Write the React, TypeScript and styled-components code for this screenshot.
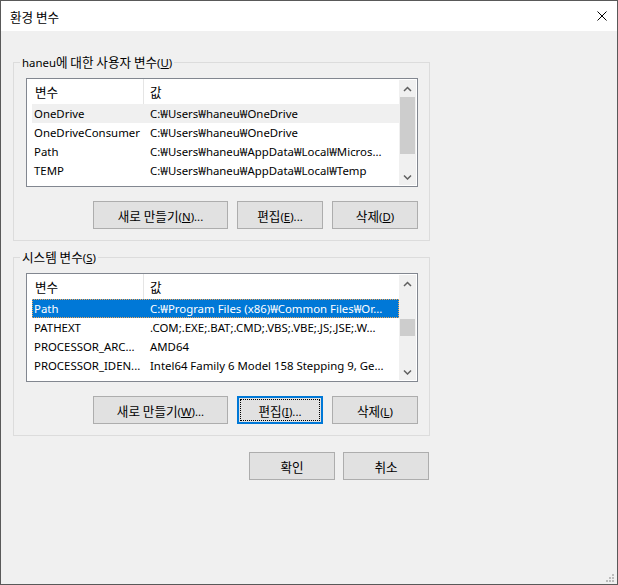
import React from "react";
import styled, { createGlobalStyle } from "styled-components";

const GlobalStyle = createGlobalStyle`
  html, body {
    margin: 0;
    padding: 0;
    background: #f0f0f0;
  }
  #root {
    width: 618px;
    height: 585px;
  }
`;

type Row = { name: string; value: string; state?: "hover" | "selected" };

const userVars: Row[] = [
  { name: "OneDrive", value: "C:₩Users₩haneu₩OneDrive", state: "hover" },
  { name: "OneDriveConsumer", value: "C:₩Users₩haneu₩OneDrive" },
  { name: "Path", value: "C:₩Users₩haneu₩AppData₩Local₩Micros..." },
  { name: "TEMP", value: "C:₩Users₩haneu₩AppData₩Local₩Temp" },
];

const systemVars: Row[] = [
  { name: "Path", value: "C:₩Program Files (x86)₩Common Files₩Or...", state: "selected" },
  { name: "PATHEXT", value: ".COM;.EXE;.BAT;.CMD;.VBS;.VBE;.JS;.JSE;.W..." },
  { name: "PROCESSOR_ARC...", value: "AMD64" },
  { name: "PROCESSOR_IDEN...", value: "Intel64 Family 6 Model 158 Stepping 9, Ge..." },
];

const Chevron = ({ down }: { down?: boolean }) => (
  <svg width="9" height="6" viewBox="0 0 9 6">
    <path
      d={down ? "M1 1.5 L4.5 5 L8 1.5" : "M1 5 L4.5 1.5 L8 5"}
      fill="none"
      stroke="#606060"
      strokeWidth="1.5"
    />
  </svg>
);

const VarList = ({ rows, thumbTop, thumbSize }: { rows: Row[]; thumbTop: number; thumbSize: number }) => (
  <ListBox>
    <ListContent>
      <HeaderRow>
        <HeadCell $first>
          <Ko>변수</Ko>
        </HeadCell>
        <HeadCell>
          <Ko>값</Ko>
        </HeadCell>
      </HeaderRow>
      {rows.map((r) => (
        <ItemRow key={r.name + r.value} $state={r.state}>
          <NameCell>{r.name}</NameCell>
          <ValueCell>{r.value}</ValueCell>
        </ItemRow>
      ))}
    </ListContent>
    <ScrollBar>
      <ArrowBox>
        <Chevron />
      </ArrowBox>
      <Track>
        <Thumb $top={thumbTop} $size={thumbSize} />
      </Track>
      <ArrowBox>
        <Chevron down />
      </ArrowBox>
    </ScrollBar>
  </ListBox>
);

const App = () => {
  return (
    <>
      <GlobalStyle />
      <Window>
        <TitleBar>
          <Ko>환경 변수</Ko>
          <svg width="10" height="10" viewBox="0 0 10 10">
            <path d="M0.5 0.5 L9.5 9.5 M9.5 0.5 L0.5 9.5" stroke="#000" strokeWidth="1" />
          </svg>
        </TitleBar>
        <Body>
          <Group $top={23}>
            <Legend>
              haneu<Ko>에 대한 사용자 변수</Ko>(<Key>U</Key>)
            </Legend>
            <VarList rows={userVars} thumbTop={0} thumbSize={57} />
            <ButtonRow>
              <Button $w={135}>
                <Ko>새로 만들기</Ko>(<Key>N</Key>)...
              </Button>
              <Button $w={86}>
                <Ko>편집</Ko>(<Key>E</Key>)...
              </Button>
              <Button $w={86}>
                <Ko>삭제</Ko>(<Key>D</Key>)
              </Button>
            </ButtonRow>
          </Group>
          <Group $top={8}>
            <Legend>
              <Ko>시스템 변수</Ko>(<Key>S</Key>)
            </Legend>
            <VarList rows={systemVars} thumbTop={27} thumbSize={17} />
            <ButtonRow>
              <Button $w={135}>
                <Ko>새로 만들기</Ko>(<Key>W</Key>)...
              </Button>
              <Button $w={86} $default>
                <Ko>편집</Ko>(<Key>I</Key>)...
              </Button>
              <Button $w={86}>
                <Ko>삭제</Ko>(<Key>L</Key>)
              </Button>
            </ButtonRow>
          </Group>
          <Footer>
            <Button $w={86}>
              <Ko>확인</Ko>
            </Button>
            <Button $w={86}>
              <Ko>취소</Ko>
            </Button>
          </Footer>
        </Body>
        <Grip width="8" height="8" viewBox="0 0 8 8">
          <rect x="6" y="0" width="2" height="2" fill="#bcbcbc" />
          <rect x="3" y="3" width="2" height="2" fill="#bcbcbc" />
          <rect x="6" y="3" width="2" height="2" fill="#bcbcbc" />
          <rect x="0" y="6" width="2" height="2" fill="#bcbcbc" />
          <rect x="3" y="6" width="2" height="2" fill="#bcbcbc" />
          <rect x="6" y="6" width="2" height="2" fill="#bcbcbc" />
        </Grip>
      </Window>
    </>
  );
};
export default App;

const Window = styled.div`
  position: relative;
  box-sizing: border-box;
  width: 618px;
  height: 585px;
  border: 1px solid #595959;
  background: #f0f0f0;
  display: flex;
  flex-direction: column;
  font-family: "Noto Sans", "Noto Sans CJK KR", sans-serif;
  font-size: 11.4px;
  color: #000;
`;
const Ko = styled.span`
  font-family: "Noto Sans CJK KR", sans-serif;
  font-size: 12.6px;
`;
const TitleBar = styled.div`
  height: 30px;
  flex: none;
  background: #fff;
  display: flex;
  align-items: center;
  justify-content: space-between;
  padding: 0 10px 0 9px;
`;
const Body = styled.div`
  display: flex;
  flex-direction: column;
  padding: 0 12px;
`;
const Group = styled.fieldset<{ $top: number }>`
  box-sizing: border-box;
  width: 417px;
  min-width: 0;
  margin: ${(p) => p.$top}px 0 0;
  padding: 8px 11px 11px 12px;
  border: 1px solid #dcdcdc;
`;
const Legend = styled.legend`
  margin-left: -6px;
  padding: 0 2px;
  line-height: 16px;
  height: 16px;
`;
const Key = styled.span`
  text-decoration: underline;
`;
const ListBox = styled.div`
  box-sizing: border-box;
  height: 109px;
  border: 1px solid #828790;
  background: #fff;
  display: flex;
  overflow: hidden;
`;
const ListContent = styled.div`
  flex: 1;
  min-width: 0;
  padding-left: 5px;
  overflow: hidden;
`;
const HeaderRow = styled.div`
  display: flex;
  height: 25px;
`;
const HeadCell = styled.div<{ $first?: boolean }>`
  box-sizing: border-box;
  display: flex;
  align-items: center;
  width: ${(p) => (p.$first ? "112px" : "auto")};
  flex: ${(p) => (p.$first ? "none" : "1")};
  padding-left: ${(p) => (p.$first ? "3px" : "6px")};
  border-right: ${(p) => (p.$first ? "1px solid #e5e5e5" : "none")};
`;
const ItemRow = styled.div<{ $state?: "hover" | "selected" }>`
  display: flex;
  height: 19px;
  line-height: 19px;
  white-space: nowrap;
  background: ${(p) =>
    p.$state === "selected" ? "#0078d7" : p.$state === "hover" ? "#f0f0f0" : "transparent"};
  color: ${(p) => (p.$state === "selected" ? "#fff" : "#000")};
  outline: ${(p) => (p.$state === "selected" ? "1px dotted #f2a85a" : "none")};
  outline-offset: -1px;
`;
const NameCell = styled.div`
  box-sizing: border-box;
  width: 112px;
  flex: none;
  padding-left: 2px;
  overflow: hidden;
  text-overflow: ellipsis;
`;
const ValueCell = styled.div`
  flex: 1;
  min-width: 0;
  padding: 0 8px 0 6px;
  overflow: hidden;
  text-overflow: ellipsis;
`;
const ScrollBar = styled.div`
  width: 17px;
  flex: none;
  margin: 1px 1px 1px 0;
  background: #f0f0f0;
  display: flex;
  flex-direction: column;
`;
const ArrowBox = styled.div`
  height: 17px;
  flex: none;
  display: flex;
  align-items: center;
  justify-content: center;
`;
const Track = styled.div`
  flex: 1;
  display: flex;
  flex-direction: column;
  align-items: center;
`;
const Thumb = styled.div<{ $top: number; $size: number }>`
  width: 15px;
  height: ${(p) => p.$size}px;
  margin-top: ${(p) => p.$top}px;
  background: #cdcdcd;
`;
const ButtonRow = styled.div`
  display: flex;
  justify-content: flex-end;
  gap: 9px;
  margin-top: 14px;
`;
const Footer = styled.div`
  display: flex;
  justify-content: flex-end;
  gap: 8px;
  width: 417px;
  padding-right: 1px;
  box-sizing: border-box;
  margin-top: 16px;
`;
const Button = styled.button<{ $w: number; $default?: boolean }>`
  box-sizing: border-box;
  width: ${(p) => p.$w}px;
  height: 28px;
  padding: 0;
  background: #e1e1e1;
  border: ${(p) => (p.$default ? "2px solid #0078d7" : "1px solid #adadad")};
  outline: ${(p) => (p.$default ? "1px dotted #000" : "none")};
  outline-offset: -4px;
  font: inherit;
  color: #000;
`;
const Grip = styled.svg`
  position: absolute;
  right: 3px;
  bottom: 2px;
`;
